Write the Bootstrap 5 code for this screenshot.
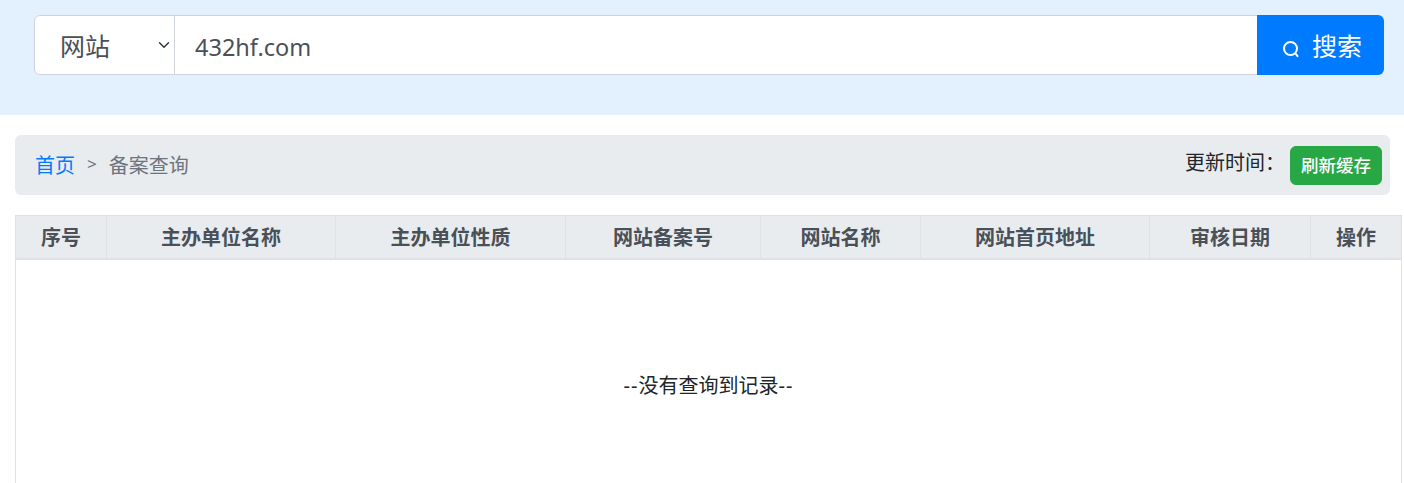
<!DOCTYPE html>
<html lang="zh-CN">
<head>
<meta charset="utf-8">
<title>备案查询</title>
<link rel="stylesheet" href="https://cdn.jsdelivr.net/npm/bootstrap@5.3.0/dist/css/bootstrap.min.css">
<style>
html, body { height: 483px; overflow: hidden; }
body { font-family: "Noto Sans", "Noto Sans CJK SC", sans-serif; color: #212529; background: #fff; }
.search-band { background: #e3f1ff; padding: 15px 20px 40px 34px; }
.search-band .form-select, .search-band .form-control {
  height: 60px; color: #495057; border-color: #ced4da; font-family: "Noto Sans", "Noto Sans CJK SC", sans-serif;
}
.search-band .form-select { flex: 0 0 141px; width: 141px; font-size: 25px; padding: 4px 24px 0 25px; background-position: right 2px center; }
.search-band .form-control { font-size: 23.5px; padding: 4px 20px 0; }
.search-go {
  flex: 0 0 127px; width: 127px; height: 60px; background: #007bff; border: 0; color: #fff; font-size: 25px;
  padding: 3px 0 0 3px; display: flex; align-items: center; justify-content: center; gap: 11px;
}
.search-go:hover { background: #007bff; color: #fff; }
.search-go svg { margin-top: 5px; }
.crumb-bar { margin: 20px 14px 20px 15px; height: 60px; background: #e9ecef; padding: 0 8px 0 20px; }
.crumb-bar .breadcrumb { font-size: 20px; margin: 2px 0 0; align-items: center; }
.crumb-bar .breadcrumb-item a { color: #007bff; text-decoration: none; }
.crumb-bar .breadcrumb-item.active { color: #6c757d; }
.crumb-bar .breadcrumb-item + .breadcrumb-item { padding-left: 12px; }
.crumb-bar .breadcrumb-item + .breadcrumb-item::before { content: ">"; color: #6c757d; padding-right: 12px; font-size: 17px; }
.update-at { font-size: 20px; margin-right: 5px; margin-top: -4px; }
.refresh-btn { background: #28a745; border-color: #28a745; color: #fff; font-size: 17.5px; font-weight: 500; height: 39px; width: 92px; padding: 0; }
.record-wrap { margin: 0 3px 0 15px; }
.record-table { table-layout: fixed; width: 1386px; border-color: #dee2e6; margin: 0; font-size: 20px; }
.record-table th { background: #e9ecef; color: #495057; height: 43px; padding: 2px 0 0; text-align: center; vertical-align: middle; font-weight: 700; border-bottom: 2px solid #dee2e6; line-height: 1.2; }
.record-table td { height: 254px; text-align: center; vertical-align: middle; padding: 0; color: #212529; }
.dash-mark { letter-spacing: 1px; }
.c1 { width: 91px; } .c2 { width: 229px; } .c3 { width: 230px; } .c4 { width: 195px; }
.c5 { width: 160px; } .c6 { width: 229px; } .c7 { width: 161px; } .c8 { width: 91px; }
</style>
</head>
<body>
<section class="search-band">
  <form class="input-group">
    <select class="form-select"><option>网站</option></select>
    <input class="form-control" type="text" value="432hf.com">
    <button class="btn search-go" type="button">
      <svg width="19" height="19" viewBox="0 0 19 19" fill="none" stroke="#fff" stroke-width="2"><circle cx="8.5" cy="8.5" r="6.5"/><path d="M13.5 13.5l2 2.7" stroke-linecap="round"/></svg>
      <span>搜索</span>
    </button>
  </form>
</section>
<nav class="crumb-bar rounded d-flex align-items-center justify-content-between">
  <ol class="breadcrumb">
    <li class="breadcrumb-item"><a href="#">首页</a></li>
    <li class="breadcrumb-item active">备案查询</li>
  </ol>
  <div class="d-flex align-items-center">
    <span class="update-at">更新时间：</span>
    <button class="btn refresh-btn" type="button">刷新缓存</button>
  </div>
</nav>
<div class="record-wrap">
  <table class="table table-bordered record-table">
    <colgroup><col class="c1"><col class="c2"><col class="c3"><col class="c4"><col class="c5"><col class="c6"><col class="c7"><col class="c8"></colgroup>
    <thead>
      <tr><th>序号</th><th>主办单位名称</th><th>主办单位性质</th><th>网站备案号</th><th>网站名称</th><th>网站首页地址</th><th>审核日期</th><th>操作</th></tr>
    </thead>
    <tbody>
      <tr><td colspan="8"><span class="dash-mark">--</span>没有查询到记录<span class="dash-mark">--</span></td></tr>
    </tbody>
  </table>
</div>
<script src="https://cdn.jsdelivr.net/npm/bootstrap@5.3.0/dist/js/bootstrap.bundle.min.js"></script>
</body>
</html>
